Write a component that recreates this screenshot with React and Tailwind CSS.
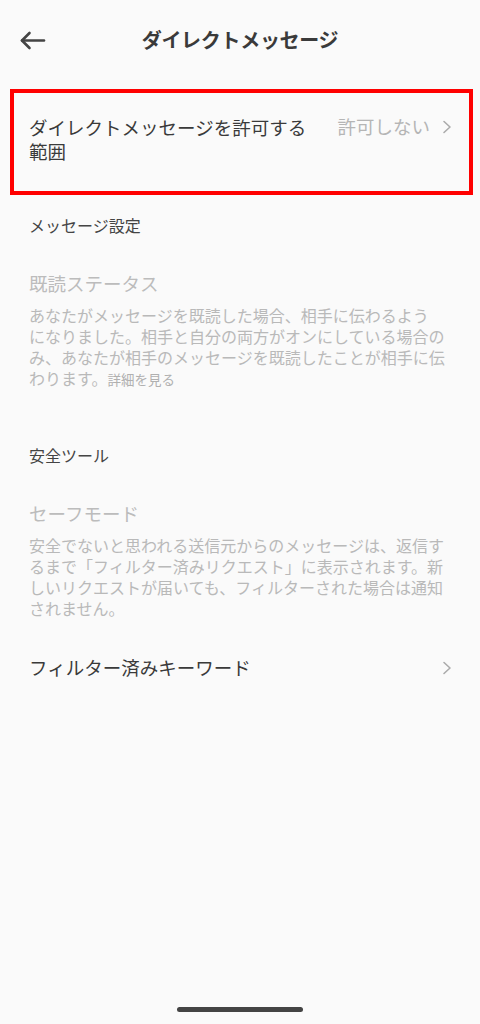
const font = { fontFamily: '"Noto Sans CJK JP", "Noto Sans", sans-serif' };

function BackArrow() {
  return (
    <svg width="27" height="19" viewBox="0 0 27 19" fill="none">
      <path d="M3 9.5H25" stroke="#444" strokeWidth="2.6" strokeLinecap="round" />
      <path d="M10.5 2L3 9.5L10.5 17" stroke="#444" strokeWidth="2.6" strokeLinecap="round" strokeLinejoin="round" />
    </svg>
  );
}

function Chevron() {
  return (
    <svg width="10" height="14" viewBox="0 0 10 14" fill="none">
      <path d="M2 1.5L8 7L2 12.5" stroke="#ababab" strokeWidth="1.6" strokeLinecap="round" strokeLinejoin="round" />
    </svg>
  );
}

function Desc({ lines, link }) {
  return (
    <p className="mt-[10px] px-[29px] text-[16px] leading-[21px] text-[#b9b9b9] whitespace-nowrap">
      {lines.map((l, i) => (
        <span key={i} className="block">
          {l}
          {link && i === lines.length - 1 && (
            <span className="text-[13.5px] leading-[21px] text-[#b0b0b0]">{link}</span>
          )}
        </span>
      ))}
    </p>
  );
}

export default function App() {
  return (
    <div className="w-[480px] h-[1024px] bg-[#fafafa] flex flex-col overflow-hidden" style={font}>
      {/* header */}
      <div className="h-[80px] relative flex items-center justify-center">
        <div className="absolute left-[19px] top-[31px]">
          <BackArrow />
        </div>
        <h1 className="text-[20px] font-bold text-[#3a3a3a] tracking-[-0.3px]">ダイレクトメッセージ</h1>
      </div>

      {/* highlighted row */}
      <div className="mx-[10px] mt-[9px] w-[463px] h-[106px] border-4 border-[#ff0000] flex items-start pt-[22px] pl-[15px] pr-[17px]">
        <div className="text-[18.5px] leading-[24px] text-[#3a3a3a] whitespace-nowrap">
          ダイレクトメッセージを許可する
          <br />
          範囲
        </div>
        <div className="ml-auto flex items-center gap-[12px] h-[24px]">
          <span className="text-[18.5px] text-[#b5b5b5]">許可しない</span>
          <Chevron />
        </div>
      </div>

      {/* message settings */}
      <div className="mt-[19px] px-[29px] text-[16px] leading-[22px] text-[#444]">メッセージ設定</div>
      <div className="mt-[35px] px-[29px] text-[18.5px] leading-[24px] text-[#bcbcbc]">既読ステータス</div>
      <Desc
        lines={[
          'あなたがメッセージを既読した場合、相手に伝わるよう',
          'になりました。相手と自分の両方がオンにしている場合の',
          'み、あなたが相手のメッセージを既読したことが相手に伝',
          'わります。',
        ]}
        link="詳細を見る"
      />

      {/* safety tools */}
      <div className="mt-[54px] px-[29px] text-[16px] leading-[22px] text-[#444]">安全ツール</div>
      <div className="mt-[35px] px-[29px] text-[18.5px] leading-[24px] text-[#bcbcbc]">セーフモード</div>
      <Desc
        lines={[
          '安全でないと思われる送信元からのメッセージは、返信す',
          'るまで「フィルター済みリクエスト」に表示されます。新',
          'しいリクエストが届いても、フィルターされた場合は通知',
          'されません。',
        ]}
      />

      <div className="mt-[37px] pl-[29px] pr-[28px] flex items-center h-[24px]">
        <span className="text-[18.5px] text-[#3a3a3a]">フィルター済みキーワード</span>
        <span className="ml-auto">
          <Chevron />
        </span>
      </div>

      {/* home indicator */}
      <div className="mt-auto mb-[12px] flex justify-center">
        <div className="w-[126px] h-[5px] rounded-full bg-[#444]" />
      </div>
    </div>
  );
}
